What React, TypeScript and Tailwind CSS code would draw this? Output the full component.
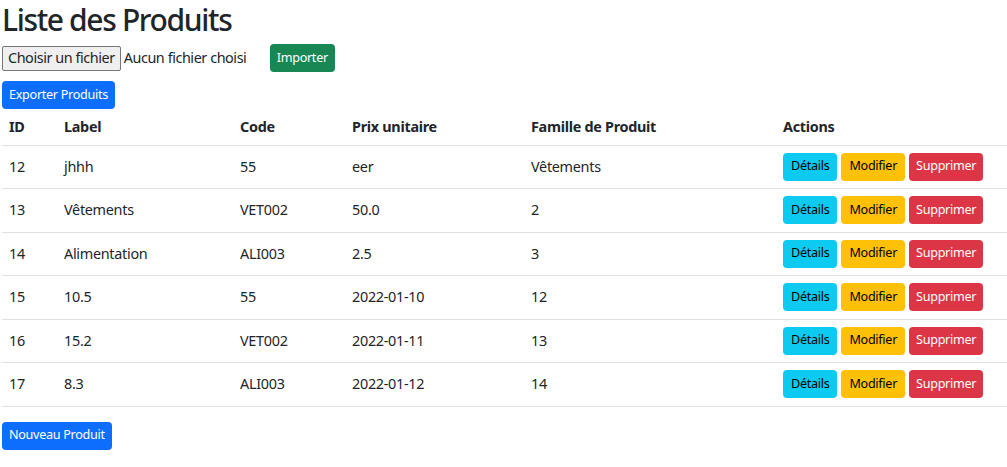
import React from 'react'

const produits = [
  { id: 12, label: 'jhhh', code: '55', prix: 'eer', famille: 'Vêtements' },
  { id: 13, label: 'Vêtements', code: 'VET002', prix: '50.0', famille: '2' },
  { id: 14, label: 'Alimentation', code: 'ALI003', prix: '2.5', famille: '3' },
  { id: 15, label: '10.5', code: '55', prix: '2022-01-10', famille: '12' },
  { id: 16, label: '15.2', code: 'VET002', prix: '2022-01-11', famille: '13' },
  { id: 17, label: '8.3', code: 'ALI003', prix: '2022-01-12', famille: '14' },
]

const btn = 'inline-flex items-center h-[28px] rounded-[4px] text-[12.6px] leading-none'

const App = () => {
  return (
    <div className="min-h-screen bg-white px-[2px] text-[#212529] font-['Noto_Sans',sans-serif] text-[14.4px] tracking-[-0.02em]">
      <h1 className="h-[44px] text-[30px] font-medium leading-[40px] tracking-[-0.045em]">Liste des Produits</h1>

      <div className="flex items-center h-[28px]">
        <span className="flex items-center h-[25px] px-[5px] bg-[#efefef] border border-[#767676] rounded-[2px] tracking-[-0.03em]">
          Choisir un fichier
        </span>
        <span className="ml-[3px] w-[146px] tracking-[-0.03em]">Aucun fichier choisi</span>
        <button className={`${btn} px-[7px] bg-[#198754] text-white`}>Importer</button>
      </div>

      <div className="mt-[9px]">
        <button className={`${btn} px-[7px] bg-[#0d6efd] text-white`}>Exporter Produits</button>
      </div>

      <table className="w-[1005px] border-collapse text-left">
        <thead>
          <tr className="h-[36px] border-b border-[#dee2e6]">
            <th className="w-[55px] px-[7px] font-bold">ID</th>
            <th className="w-[176px] px-[7px] font-bold">Label</th>
            <th className="w-[112px] px-[7px] font-bold">Code</th>
            <th className="w-[179px] px-[7px] font-bold">Prix unitaire</th>
            <th className="w-[252px] px-[7px] font-bold">Famille de Produit</th>
            <th className="px-[7px] font-bold">Actions</th>
          </tr>
        </thead>
        <tbody>
          {produits.map((p) => (
            <tr key={p.id} className="h-[43.5px] border-b border-[#dee2e6]">
              <td className="px-[7px] align-middle">{p.id}</td>
              <td className="px-[7px] align-middle">{p.label}</td>
              <td className="px-[7px] align-middle">{p.code}</td>
              <td className="px-[7px] align-middle">{p.prix}</td>
              <td className="px-[7px] align-middle">{p.famille}</td>
              <td className="px-[7px] align-middle">
                <div className="flex gap-[4px]">
                  <button className={`${btn} px-[8px] bg-[#0dcaf0] text-black`}>Détails</button>
                  <button className={`${btn} px-[8px] bg-[#ffc107] text-black`}>Modifier</button>
                  <button className={`${btn} px-[7px] bg-[#dc3545] text-white`}>Supprimer</button>
                </div>
              </td>
            </tr>
          ))}
        </tbody>
      </table>

      <div className="mt-[15px]">
        <button className={`${btn} px-[7px] bg-[#0d6efd] text-white`}>Nouveau Produit</button>
      </div>
    </div>
  )
}

export default App
